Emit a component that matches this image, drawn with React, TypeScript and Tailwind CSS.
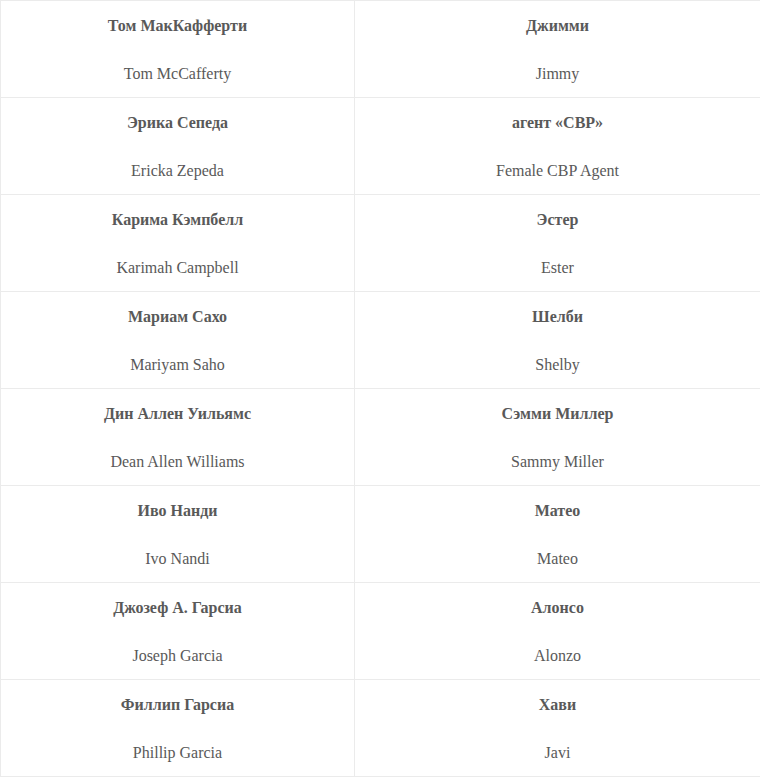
import React from "react";

const rows = [
  ["Том МакКафферти", "Tom McCafferty", "Джимми", "Jimmy"],
  ["Эрика Сепеда", "Ericka Zepeda", "агент «CBP»", "Female CBP Agent"],
  ["Карима Кэмпбелл", "Karimah Campbell", "Эстер", "Ester"],
  ["Мариам Сахо", "Mariyam Saho", "Шелби", "Shelby"],
  ["Дин Аллен Уильямс", "Dean Allen Williams", "Сэмми Миллер", "Sammy Miller"],
  ["Иво Нанди", "Ivo Nandi", "Матео", "Mateo"],
  ["Джозеф А. Гарсиа", "Joseph Garcia", "Алонсо", "Alonzo"],
  ["Филлип Гарсиа", "Phillip Garcia", "Хави", "Javi"],
];

const Cell = ({ ru, en }: { ru: string; en: string }) => (
  <td className="border border-[#ebebeb] px-3 pt-[13px] pb-[11px] text-center align-top">
    <p className="font-bold leading-6">{ru}</p>
    <p className="mt-6 leading-6">{en}</p>
  </td>
);

const App = () => {
  return (
    <div className="w-[760px] bg-white font-['Liberation_Serif',serif] text-[16px] text-[#595959]">
      <table className="w-[761px] border-collapse table-fixed">
        <colgroup>
          <col className="w-[354px]" />
          <col />
        </colgroup>
        <tbody>
          {rows.map((r, i) => (
            <tr key={i}>
              <Cell ru={r[0]} en={r[1]} />
              <Cell ru={r[2]} en={r[3]} />
            </tr>
          ))}
        </tbody>
      </table>
    </div>
  );
};

export default App;
